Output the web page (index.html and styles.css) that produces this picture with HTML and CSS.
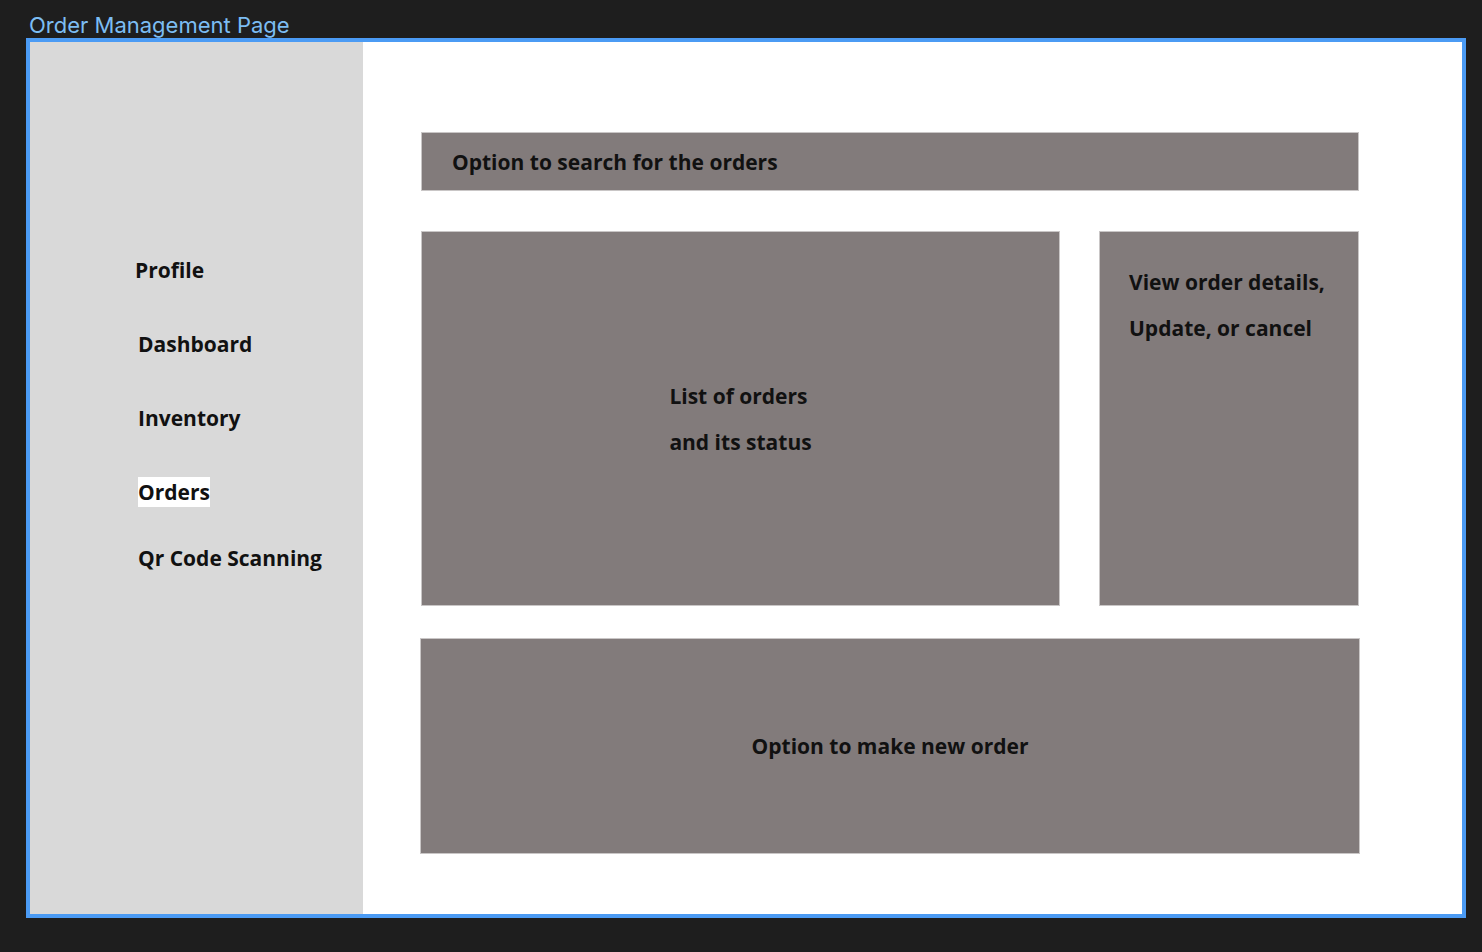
FILE: index.html
```html
<!DOCTYPE html>
<html>
    <head>
        <title>Order Management Page</title>
        <link rel="stylesheet" href="styles.css">
    </head>
<body>
    <div class="frame-label">Order Management Page</div>

    <div class="frame">
        <div class="sidebar">
            <div class="nav-item profile">Profile</div>
            <div class="nav-item">Dashboard</div>
            <div class="nav-item">Inventory</div>
            <div class="nav-item active">Orders</div>
            <div class="nav-item scan">Qr Code Scanning</div>
        </div>

        <div class="main">
            <div class="box search-bar">Option to search for the orders</div>

            <div class="middle-row">
                <div class="box order-list">
                    <div class="box-text">
                        <div>List of orders</div>
                        <div>and its status</div>
                    </div>
                </div>
                <div class="box order-details">
                    <div>View order details,</div>
                    <div>Update, or cancel</div>
                </div>
            </div>

            <div class="box new-order">Option to make new order</div>
        </div>
    </div>
</body>
</html>
```

FILE: styles.css
```css
body {
    margin: 0;
    padding: 0;
    background-color: #1e1e1e;
    font-family: "Open Sans", Arial, sans-serif;
}

.frame-label {
    font-family: Inter, "Liberation Sans", sans-serif;
    font-size: 22px;
    color: #7cbdf3;
    height: 38px;
    line-height: 50px;
    padding-left: 29px;
    box-sizing: border-box;
}

.frame {
    margin-left: 26px;
    width: 1440px;
    height: 880px;
    box-sizing: border-box;
    border: 4px solid #4b9bf4;
    background: #ffffff;
    display: flex;
}

.sidebar {
    width: 333px;
    background: #d9d9d9;
    display: flex;
    flex-direction: column;
    align-items: flex-start;
    padding: 213px 0 0 108px;
    box-sizing: border-box;
    gap: 44px;
}

.nav-item {
    font-size: 21px;
    font-weight: 700;
    color: #111;
    line-height: 30px;
    height: 30px;
}

.nav-item.profile {
    margin-left: -3px;
}

.nav-item.active {
    background: #ffffff;
}

.nav-item.scan {
    margin-top: -8px;
}

.main {
    flex: 1;
    padding: 90px 103px 0 58px;
    display: flex;
    flex-direction: column;
}

.box {
    background: #827b7b;
    box-shadow: inset 0 0 0 1px #c9c6c6;
    color: #111;
    font-size: 21px;
    font-weight: 700;
}

.search-bar {
    height: 59px;
    display: flex;
    align-items: center;
    padding-left: 31px;
}

.middle-row {
    display: flex;
    gap: 39px;
    margin-top: 40px;
    height: 375px;
}

.order-list {
    flex: 1;
    display: flex;
    align-items: center;
    justify-content: center;
}

.box-text {
    line-height: 46px;
}

.order-details {
    width: 260px;
    padding: 28px 0 0 30px;
    box-sizing: border-box;
    line-height: 46px;
}

.new-order {
    margin: 32px -1px 0 -1px;
    height: 216px;
    display: flex;
    align-items: center;
    justify-content: center;
}
```
